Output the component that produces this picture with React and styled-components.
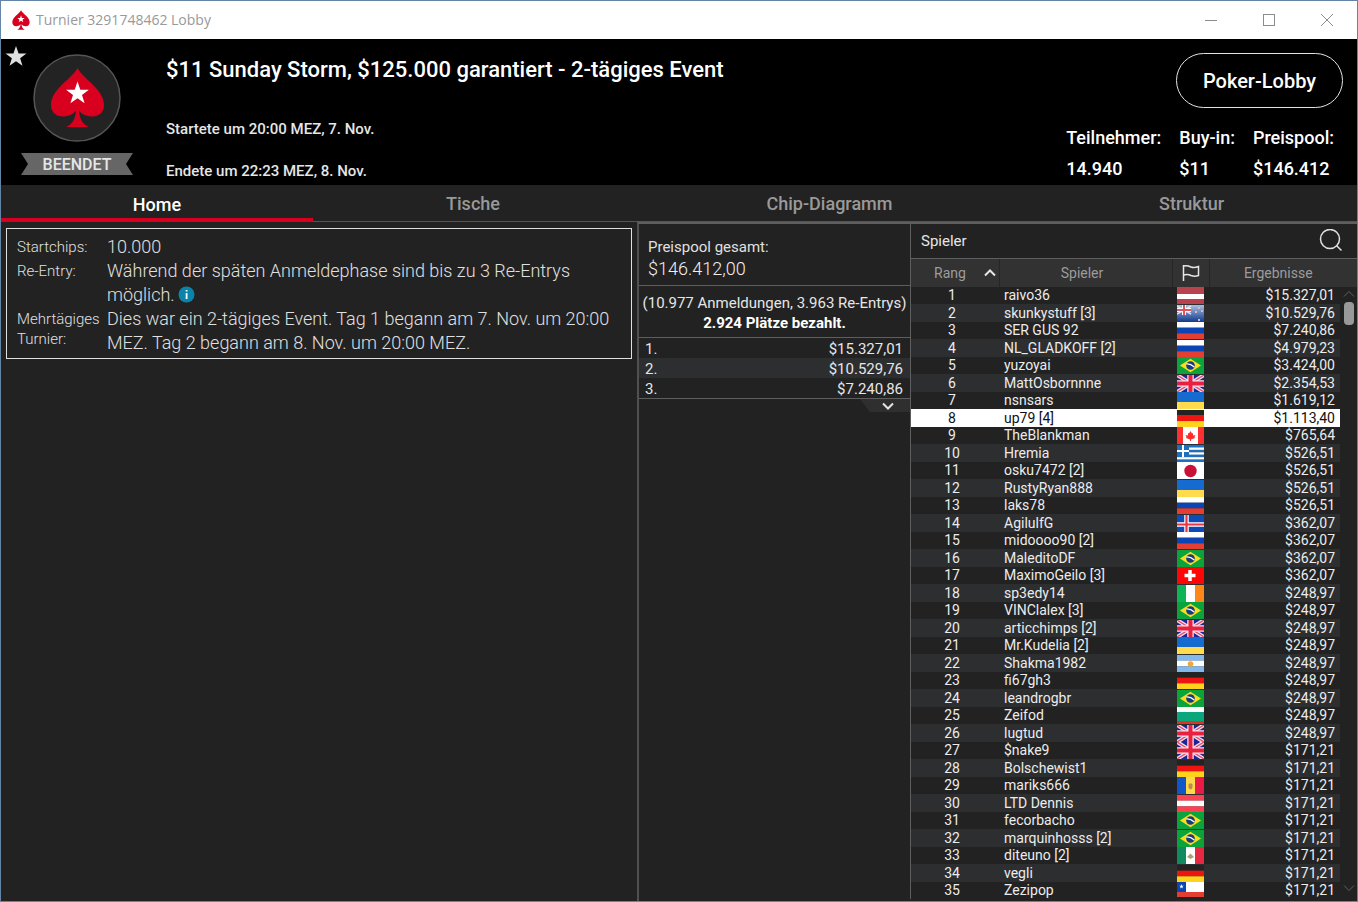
import React from "react";
import styled, { createGlobalStyle, css } from "styled-components";

const GlobalStyle = createGlobalStyle`
  *, *::before, *::after {
    box-sizing: border-box;
  }

  body {
    margin: 0;
    background: #222222;
    color: #e6e6e6;
    font-family: Roboto, "Liberation Sans", sans-serif;
  }

  button {
    margin: 0;
    padding: 0;
    border: none;
    background: none;
    color: inherit;
    font: inherit;
    cursor: pointer;
  }

  svg {
    display: block;
    flex: none;
  }
`;

const Window = styled.div`
  display: flex;
  flex-direction: column;
  height: 100vh;
  border: 1px solid #6485a6;
  background: #222222;
  overflow: hidden;
`;

/* ---------- title bar ---------- */

const TitleBar = styled.div`
  flex: none;
  display: flex;
  align-items: center;
  height: 38px;
  padding: 0 1px 0 11px;
  background: #ffffff;
`;

const WindowTitle = styled.span`
  flex: 1;
  padding: 0 0 2px 6px;
  color: #999999;
  font-family: "Open Sans", "Noto Sans", sans-serif;
  font-size: 14px;
`;

const WindowButton = styled.button`
  display: flex;
  align-items: center;
  justify-content: center;
  width: 58px;
  height: 38px;
  color: #8c8c8c;
`;

/* ---------- header ---------- */

const Header = styled.header`
  position: relative;
  flex: none;
  display: flex;
  height: 146px;
  background: #000000;
`;

const FavouriteButton = styled.button`
  position: absolute;
  top: 6px;
  left: 4px;
`;

const Emblem = styled.div`
  flex: none;
  display: flex;
  flex-direction: column;
  align-items: center;
  gap: 11px;
  width: 132px;
  margin-left: 10px;
  padding-top: 15px;
`;

const StatusRibbon = styled.div`
  width: 112px;
  height: 22px;
  background: #666666;
  clip-path: polygon(0 0, 100% 0, calc(100% - 7px) 50%, 100% 100%, 0 100%, 7px 50%);
  font-size: 16px;
  font-weight: 500;
  line-height: 24px;
  text-align: center;
`;

const EventInfo = styled.div`
  flex: 1;
  padding: 18px 0 0 23px;
`;

const EventName = styled.h1`
  margin: 0;
  color: #ffffff;
  font-size: 22px;
  font-weight: 500;
  line-height: 26px;
`;

const EventTime = styled.p`
  margin: 0;
  padding-top: 22px;
  font-size: 15px;
  font-weight: 500;
  line-height: 20px;

  ${EventName} + & {
    padding-top: 36px;
  }
`;

const HeaderSide = styled.div`
  flex: none;
  display: flex;
  flex-direction: column;
  align-items: flex-end;
  padding: 14px 14px 0 0;
`;

const LobbyButton = styled.button`
  width: 167px;
  height: 55px;
  border: 1px solid #e4e4e4;
  border-radius: 28px;
  color: #ffffff;
  font-size: 20px;
  font-weight: 500;
`;

const Stats = styled.dl`
  display: flex;
  gap: 18px;
  margin: 0;
  padding: 14px 9px 0 0;
  color: #ffffff;
  font-size: 18px;
  font-weight: 500;
  line-height: 31px;

  dd {
    margin: 0;
  }
`;

/* ---------- tabs ---------- */

const Tabs = styled.nav`
  flex: none;
  display: grid;
  grid-template-columns: 312fr 320fr 393fr 331fr;
  height: 37px;
`;

const Tab = styled.button`
  border-bottom: 1px solid #555555;
  color: #999999;
  font-size: 18px;
  font-weight: 500;

  ${({ $active }) =>
    $active &&
    css`
      padding-top: 5px;
      border-bottom: 4px solid #d9001f;
      color: #ffffff;
    `}
`;

/* ---------- content ---------- */

const Content = styled.main`
  flex: 1;
  display: grid;
  grid-template-columns: minmax(0, 1fr) 273px 447px;
  min-height: 0;
`;

const InfoPanel = styled.section`
  padding: 6px 5px;
`;

const InfoBox = styled.dl`
  display: grid;
  grid-template-columns: 90px 1fr;
  margin: 0;
  padding: 6px 10px 3px;
  border: 1px solid #e0e0e0;
  color: #e0e0e0;
  font-weight: 300;

  dt {
    padding-top: 2px;
    font-size: 15px;
    line-height: 20px;
  }

  dd {
    margin: 0;
    font-size: 18px;
    line-height: 24px;
  }
`;

const InfoBadge = styled.button`
  margin-left: 3px;
  line-height: 17px;
  vertical-align: -2px;
`;

const PrizePanel = styled.section`
  border-top: 2px solid #5e5e5e;
  border-left: 2px solid #505050;
`;

const PrizeTotal = styled.div`
  padding: 12px 9px 5px;
  border-bottom: 1px solid #5e5e5e;
  color: #e0e0e0;
  font-size: 15px;
  line-height: 22px;

  strong {
    display: block;
    color: #f0f0f0;
    font-size: 18px;
    font-weight: 300;
  }
`;

const Entries = styled.div`
  padding: 7px 0 4px;
  border-bottom: 1px solid #5e5e5e;
  font-size: 15px;
  line-height: 20px;
  text-align: center;
  white-space: nowrap;

  strong {
    display: block;
    color: #ffffff;
    font-weight: 700;
  }
`;

const PrizeTable = styled.table`
  width: 100%;
  border-collapse: collapse;
  border-bottom: 1px solid #5e5e5e;
  font-size: 15px;
  line-height: 18px;

  tr:nth-child(even) {
    background: #2c2e30;
  }

  td {
    padding: 2px 7px 0 6px;
  }

  td:last-child {
    text-align: right;
  }
`;

const ExpandButton = styled.button`
  display: flex;
  justify-content: center;
  align-items: center;
  width: 50px;
  height: 13px;
  margin-left: auto;
  padding-left: 5px;
  background: #2f2f2f;
  clip-path: polygon(0 0, 100% 0, 100% 100%, 10px 100%);
`;

const PlayerPanel = styled.section`
  display: flex;
  flex-direction: column;
  min-height: 0;
  margin-bottom: 2px;
  border-top: 2px solid #5e5e5e;
  border-left: 1px solid #5e5e5e;
`;

const PlayerHeading = styled.div`
  flex: none;
  display: flex;
  align-items: center;
  justify-content: space-between;
  height: 35px;
  padding: 0 14px 0 10px;
  border-bottom: 1px solid #5e5e5e;

  h2 {
    margin: 0;
    font-size: 15px;
    font-weight: 400;
  }
`;

const PlayerList = styled.div`
  flex: 1;
  display: flex;
  min-height: 0;
`;

const TableClip = styled.div`
  flex: 1;
  overflow: hidden;
`;

const PlayerTable = styled.table`
  width: 100%;
  table-layout: fixed;
  border-collapse: collapse;
  font-size: 14px;

  th {
    height: 28px;
    padding: 0;
    border-right: 1px solid #262626;
    background: #323232;
    color: #9c9c9c;
    font-weight: 400;
  }

  th:nth-child(2) {
    padding-right: 7px;
  }

  th:last-child {
    padding-left: 7px;
    border-right: none;
  }
`;

const RankColumn = styled.col`
  width: 88px;
`;

const FlagColumn = styled.col`
  width: 37px;
`;

const ResultColumn = styled.col`
  width: 131px;
`;

const SortButton = styled.button`
  display: flex;
  align-items: center;
  justify-content: space-between;
  width: 100%;
  padding: 0 3px 0 23px;

  svg {
    color: #e6e6e6;
  }
`;

const FlagHeading = styled.span`
  display: flex;
  justify-content: center;
`;

const PlayerRow = styled.tr`
  height: 17px;
  line-height: 17px;
  color: #ececec;

  &:nth-child(even) {
    height: 18px;
    background: #2c2e30;
  }

  ${({ $self }) =>
    $self &&
    css`
      &&& {
        background: #ffffff;
        color: #111111;
      }
    `}

  td {
    padding: 0 5px;
    white-space: nowrap;
  }

  td:first-child {
    padding-right: 11px;
    text-align: center;
  }

  td:last-child {
    text-align: right;
  }
`;

const ScrollTrack = styled.div`
  flex: none;
  display: flex;
  flex-direction: column;
  align-items: center;
  width: 17px;
  padding-bottom: 7px;
  color: #606060;

  &::before {
    content: "";
    align-self: stretch;
    height: 28px;
    margin-bottom: 3px;
    background: #323232;
  }
`;

const ScrollThumb = styled.div`
  width: 10px;
  height: 23px;
  margin: 4px 0 auto;
  border-radius: 4px;
  background: #999999;
`;

/* ---------- drawings ---------- */

const SPADE =
  "M44.5 14C38 26 18 35 18 51C18 58.500 23.500 62.500 29.500 62.500C36 62.500 40.500 60 43 56.500C42.500 64 40 70 33 73H56C49 70 46.500 64 46 56.500C48.500 60 53 62.500 59.500 62.500C65.500 62.500 71 58.500 71 51C71 35 51 26 44.500 14Z";
const STAR = "M0-12 2.800-3.800 11.400-3.700 4.500 1.500 7.100 9.700 0 4.800-7.100 9.700-4.500 1.500-11.400-3.700-2.800-3.800Z";

const Logo = () => (
  <svg width="88" height="88" viewBox="0 0 88 88" aria-hidden="true">
    <circle cx="44" cy="44" r="43" fill="#232323" stroke="#555555" strokeWidth="1.500" />
    <path d={SPADE} fill="#d9001f" />
    <path d={STAR} transform="translate(44.500 39.500)" fill="#ffffff" />
  </svg>
);

const SmallLogo = () => (
  <svg width="18" height="20" viewBox="17 13 55 61" aria-hidden="true">
    <path d={SPADE} fill="#d9001f" />
    <path d={STAR} transform="translate(44.500 41)" fill="#ffffff" />
  </svg>
);

const Chevron = ({ up, width = 12, strokeWidth = 2 }) => (
  <svg width={width} height="8" viewBox="0 0 12 8" fill="none" stroke="currentColor" strokeWidth={strokeWidth}>
    <path d={up ? "M1 6.500 6 1.500 11 6.500" : "M1 1.500 6 6.500 11 1.500"} />
  </svg>
);

const SearchIcon = () => (
  <svg width="24" height="24" viewBox="0 0 24 24" fill="none" stroke="#e0e0e0" strokeWidth="1.500">
    <circle cx="11" cy="10" r="9.500" />
    <path d="M17.500 16.500 22.500 21.500" />
  </svg>
);

const FlagIcon = () => (
  <svg width="18" height="18" viewBox="0 0 18 18" fill="none" stroke="#e6e6e6" strokeWidth="1.500">
    <path d="M1.500 1V17" />
    <path d="M1.500 2C5 1 7 2 9 3C11.500 4 14 3.500 16.500 2.500V11.500C14 12.500 11.500 12.500 9 11.500C7 10.500 5 10 1.500 11" />
  </svg>
);

const InfoIcon = () => (
  <svg width="17" height="17" viewBox="0 0 17 17">
    <circle cx="8.500" cy="8.500" r="8" fill="#0a84a8" />
    <path d="M7.700 4H9.500V5.600H7.700ZM7.700 7H9.500V13H7.700Z" fill="#ffffff" />
  </svg>
);

const bands = (...colors) =>
  colors.map((fill, i) => (
    <rect key={i} y={(17 / colors.length) * i} width="27" height={17 / colors.length + 0.1} fill={fill} />
  ));

const columns = (...colors) =>
  colors.map((fill, i) => <rect key={i} x={9 * i} width="9" height="17" fill={fill} />);

const FLAGS = {
  lv: (
    <>
      <rect width="27" height="17" fill="#b8424e" />
      <rect y="7" width="27" height="5" fill="#ffffff" />
    </>
  ),
  nz: (
    <>
      <rect width="27" height="17" fill="url(#nzSky)" />
      <path d="M0 1 14 9M14 1 0 9" stroke="#dfe3f2" strokeWidth="1.500" />
      <path d="M7 0V10M0 5H14" stroke="#ffffff" strokeWidth="4" />
      <path d="M7 0V10M0 5H14" stroke="#e2555f" strokeWidth="2" />
      <g fill="#d8b5cd">
        <rect x="21" y="2" width="2" height="2" />
        <rect x="18" y="6" width="2" height="2" />
        <rect x="24" y="5" width="2" height="2" />
        <rect x="21" y="14" width="2" height="2" />
      </g>
    </>
  ),
  ru: bands("#ffffff", "#0b45b5", "#e43d32"),
  br: (
    <>
      <rect width="27" height="17" fill="#0ba43c" />
      <path d="M3 8.500 13.500 1.800 24 8.500 13.500 15.200Z" fill="#fddc1c" />
      <circle cx="13.500" cy="8.500" r="4.300" fill="#173c82" />
      <path d="M9.500 7C12 6.800 15 8 17.300 10" fill="none" stroke="#ffffff" strokeWidth="1.300" />
    </>
  ),
  gb: (
    <>
      <rect width="27" height="17" fill="#1b269a" />
      <path d="M0 0 27 17M27 0 0 17" stroke="#f3dce6" strokeWidth="4" />
      <path d="M0 0 27 17M27 0 0 17" stroke="#e6496a" strokeWidth="1.300" />
      <path d="M13.500 0V17M0 8.500H27" stroke="#fbe4ea" strokeWidth="6.500" />
      <path d="M13.500 0V17M0 8.500H27" stroke="#e9203f" strokeWidth="4" />
    </>
  ),
  ua: (
    <>
      <rect width="27" height="10" fill="#156bd0" />
      <rect y="10" width="27" height="7" fill="#ffdb4d" />
    </>
  ),
  de: bands("#232323", "#ee1410", "#ffd21c"),
  ca: (
    <>
      {columns("#ff3030", "#ffffff", "#ff3030")}
      <rect x="6" width="15" height="17" fill="#ffffff" />
      <path
        d="M13.500 4 15 6.500 16 6V8.500L18.500 8 17.500 10 18 11 14 12.500V14H13V12.500L9 11 9.500 10 8.500 8 11 8.500V6L12 6.500Z"
        fill="#ff2d2d"
      />
    </>
  ),
  gr: (
    <>
      {bands("#1e6fc2", "#ffffff", "#1e6fc2", "#ffffff", "#1e6fc2", "#ffffff", "#1e6fc2")}
      <rect width="12" height="12" fill="#1e6fc2" />
      <path d="M6 0V12M0 6H12" stroke="#ffffff" strokeWidth="2" />
    </>
  ),
  jp: (
    <>
      <rect width="27" height="17" fill="#ffffff" />
      <circle cx="13.500" cy="9" r="6.200" fill="#cb1037" />
    </>
  ),
  is: (
    <>
      <rect width="27" height="17" fill="#0c4bb8" />
      <path d="M9.500 0V17M0 9.500H27" stroke="#ffffff" strokeWidth="4.500" />
      <path d="M9.500 0V17M0 9.500H27" stroke="#ea3440" strokeWidth="2.200" />
    </>
  ),
  ch: (
    <>
      <rect width="27" height="17" fill="#ff0505" />
      <path d="M13 3V14M7.500 8.500H18.500" stroke="#ffffff" strokeWidth="3.500" />
    </>
  ),
  ie: columns("#0eb556", "#ffffff", "#ff8718"),
  ar: (
    <>
      {bands("#82b8ea", "#ffffff", "#82b8ea")}
      <circle cx="13.500" cy="9" r="2.800" fill="#f0a83a" />
    </>
  ),
  bg: (
    <>
      <rect width="27" height="6" fill="#ffffff" />
      <rect y="5" width="27" height="9" fill="#0ba67b" />
      <rect y="14" width="27" height="3" fill="#dd3523" />
    </>
  ),
  md: (
    <>
      {columns("#1155c8", "#ffd84a", "#ea1a46")}
      <path d="M12 7H15V11L13.500 12 12 11Z" fill="#c08a4a" stroke="#c08a4a" />
    </>
  ),
  at: bands("#fb4252", "#ffffff", "#fb4252"),
  mx: (
    <>
      {columns("#138a5e", "#ffffff", "#e62840")}
      <path d="M10 10 12 8 13.500 6.500 15 8 17 10 13.500 12Z" fill="#b0a070" />
    </>
  ),
  cl: (
    <>
      <rect width="27" height="17" fill="#ffffff" />
      <rect y="10" width="27" height="5" fill="#e43d32" />
      <rect y="15" width="27" height="2" fill="#222222" />
      <rect width="9" height="10" fill="#0b45b5" />
      <path d={STAR} transform="translate(4.500 4.500) scale(.2)" fill="#ffffff" />
    </>
  ),
};

const Flag = ({ code }) => (
  <svg width="27" height="17" viewBox="0 0 27 17" role="img" aria-label={code}>
    <defs>
      <linearGradient id="nzSky" x1="0" x2="0" y1="0" y2="1">
        <stop offset="0" stopColor="#a9bfe2" />
        <stop offset="1" stopColor="#123a8c" />
      </linearGradient>
    </defs>
    {FLAGS[code]}
  </svg>
);

/* ---------- data ---------- */

const TABS = ["Home", "Tische", "Chip-Diagramm", "Struktur"];

const STATS = [
  ["Teilnehmer:", "14.940"],
  ["Buy-in:", "$11"],
  ["Preispool:", "$146.412"],
];

const PRIZES = ["$15.327,01", "$10.529,76", "$7.240,86"];

const PLAYERS = [
  ["raivo36", "lv", "$15.327,01"],
  ["skunkystuff [3]", "nz", "$10.529,76"],
  ["SER GUS 92", "ru", "$7.240,86"],
  ["NL_GLADKOFF [2]", "ru", "$4.979,23"],
  ["yuzoyai", "br", "$3.424,00"],
  ["MattOsbornnne", "gb", "$2.354,53"],
  ["nsnsars", "ua", "$1.619,12"],
  ["up79 [4]", "de", "$1.113,40"],
  ["TheBlankman", "ca", "$765,64"],
  ["Hremia", "gr", "$526,51"],
  ["osku7472 [2]", "jp", "$526,51"],
  ["RustyRyan888", "ua", "$526,51"],
  ["laks78", "ru", "$526,51"],
  ["AgilulfG", "is", "$362,07"],
  ["midoooo90 [2]", "ru", "$362,07"],
  ["MaleditoDF", "br", "$362,07"],
  ["MaximoGeilo [3]", "ch", "$362,07"],
  ["sp3edy14", "ie", "$248,97"],
  ["VINClalex [3]", "br", "$248,97"],
  ["articchimps [2]", "gb", "$248,97"],
  ["Mr.Kudelia [2]", "ua", "$248,97"],
  ["Shakma1982", "ar", "$248,97"],
  ["fi67gh3", "de", "$248,97"],
  ["leandrogbr", "br", "$248,97"],
  ["Zeifod", "bg", "$248,97"],
  ["lugtud", "gb", "$248,97"],
  ["$nake9", "gb", "$171,21"],
  ["Bolschewist1", "de", "$171,21"],
  ["mariks666", "md", "$171,21"],
  ["LTD Dennis", "at", "$171,21"],
  ["fecorbacho", "br", "$171,21"],
  ["marquinhosss [2]", "br", "$171,21"],
  ["diteuno [2]", "mx", "$171,21"],
  ["vegli", "de", "$171,21"],
  ["Zezipop", "cl", "$171,21"],
];

const SELF_RANK = 8;

/* ---------- page ---------- */

const App = () => (
  <>
    <GlobalStyle />
    <Window>
      <TitleBar>
        <SmallLogo />
        <WindowTitle>Turnier 3291748462 Lobby</WindowTitle>
        <WindowButton aria-label="Minimieren">
          <svg width="12" height="12" viewBox="0 0 12 12" stroke="currentColor">
            <path d="M0 6.500H12" />
          </svg>
        </WindowButton>
        <WindowButton aria-label="Maximieren">
          <svg width="12" height="12" viewBox="0 0 12 12" fill="none" stroke="currentColor">
            <rect x=".5" y=".5" width="11" height="11" />
          </svg>
        </WindowButton>
        <WindowButton aria-label="Schließen">
          <svg width="12" height="12" viewBox="0 0 12 12" stroke="currentColor">
            <path d="M0 0 12 12M12 0 0 12" />
          </svg>
        </WindowButton>
      </TitleBar>

      <Header>
        <FavouriteButton aria-label="Favorit">
          <svg width="22" height="22" viewBox="-12 -13 24 24">
            <path d={STAR} fill="#e0e0e0" />
          </svg>
        </FavouriteButton>
        <Emblem>
          <Logo />
          <StatusRibbon>BEENDET</StatusRibbon>
        </Emblem>
        <EventInfo>
          <EventName>$11 Sunday Storm, $125.000 garantiert - 2-tägiges Event</EventName>
          <EventTime>Startete um 20:00 MEZ, 7. Nov.</EventTime>
          <EventTime>Endete um 22:23 MEZ, 8. Nov.</EventTime>
        </EventInfo>
        <HeaderSide>
          <LobbyButton>Poker-Lobby</LobbyButton>
          <Stats>
            {STATS.map(([label, value]) => (
              <div key={label}>
                <dt>{label}</dt>
                <dd>{value}</dd>
              </div>
            ))}
          </Stats>
        </HeaderSide>
      </Header>

      <Tabs>
        {TABS.map((label, index) => (
          <Tab key={label} $active={index === 0}>
            {label}
          </Tab>
        ))}
      </Tabs>

      <Content>
        <InfoPanel>
          <InfoBox>
            <dt>Startchips:</dt>
            <dd>10.000</dd>
            <dt>Re-Entry:</dt>
            <dd>
              Während der späten Anmeldephase sind bis zu 3 Re-Entrys möglich.
              <InfoBadge aria-label="Info">
                <InfoIcon />
              </InfoBadge>
            </dd>
            <dt>Mehrtägiges Turnier:</dt>
            <dd>
              Dies war ein 2-tägiges Event. Tag 1 begann am 7. Nov. um 20:00 MEZ. Tag 2 begann am 8. Nov. um 20:00 MEZ.
            </dd>
          </InfoBox>
        </InfoPanel>

        <PrizePanel>
          <PrizeTotal>
            Preispool gesamt:
            <strong>$146.412,00</strong>
          </PrizeTotal>
          <Entries>
            (10.977 Anmeldungen, 3.963 Re-Entrys)
            <strong>2.924 Plätze bezahlt.</strong>
          </Entries>
          <PrizeTable>
            <tbody>
              {PRIZES.map((prize, index) => (
                <tr key={prize}>
                  <td>{index + 1}.</td>
                  <td>{prize}</td>
                </tr>
              ))}
            </tbody>
          </PrizeTable>
          <ExpandButton aria-label="Mehr anzeigen">
            <Chevron />
          </ExpandButton>
        </PrizePanel>

        <PlayerPanel>
          <PlayerHeading>
            <h2>Spieler</h2>
            <button aria-label="Suchen">
              <SearchIcon />
            </button>
          </PlayerHeading>
          <PlayerList>
            <TableClip>
              <PlayerTable>
                <colgroup>
                  <RankColumn />
                  <col />
                  <FlagColumn />
                  <ResultColumn />
                </colgroup>
                <thead>
                  <tr>
                    <th>
                      <SortButton>
                        Rang
                        <Chevron up />
                      </SortButton>
                    </th>
                    <th>Spieler</th>
                    <th>
                      <FlagHeading>
                        <FlagIcon />
                      </FlagHeading>
                    </th>
                    <th>Ergebnisse</th>
                  </tr>
                </thead>
                <tbody>
                  {PLAYERS.map(([name, country, result], index) => (
                    <PlayerRow key={name} $self={index + 1 === SELF_RANK}>
                      <td>{index + 1}</td>
                      <td>{name}</td>
                      <td>
                        <Flag code={country} />
                      </td>
                      <td>{result}</td>
                    </PlayerRow>
                  ))}
                </tbody>
              </PlayerTable>
            </TableClip>
            <ScrollTrack>
              <Chevron up strokeWidth={1} />
              <ScrollThumb />
              <Chevron strokeWidth={1} />
            </ScrollTrack>
          </PlayerList>
        </PlayerPanel>
      </Content>
    </Window>
  </>
);

export default App;
